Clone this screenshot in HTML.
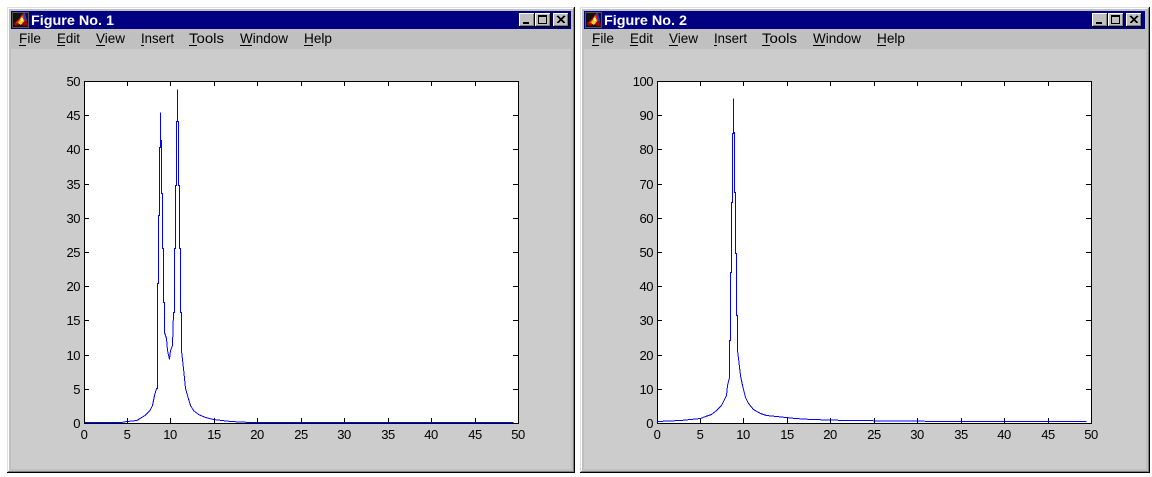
<!DOCTYPE html>
<html><head><meta charset="utf-8"><title>Figures</title>
<style>
html,body{margin:0;padding:0;background:#fff;width:1152px;height:477px;overflow:hidden}
svg{display:block}
.t{font:bold 14px "Liberation Sans",sans-serif;fill:#fff}
.m{font:14px "Liberation Sans",sans-serif;fill:#000}
.a{font:13px "Liberation Sans",sans-serif;fill:#000;letter-spacing:-.5px}
.e{text-anchor:end}.c{text-anchor:middle}
.k{fill:none;stroke:#000;stroke-width:1;shape-rendering:crispEdges}
.b{fill:none;stroke:#00f;stroke-width:1;shape-rendering:crispEdges}
.r{shape-rendering:crispEdges}
</style></head><body>
<svg width="1152" height="477" viewBox="0 0 1152 477" xmlns="http://www.w3.org/2000/svg">
<rect width="1152" height="477" fill="#fff"/>

<!-- window 1 -->
<g class="r">
<rect x="7" y="7" width="568" height="466" fill="#000"/>
<rect x="7" y="7" width="567" height="465" fill="#dfdfdf"/>
<rect x="8" y="8" width="566" height="464" fill="#808080"/>
<rect x="8" y="8" width="565" height="463" fill="#fff"/>
<rect x="9" y="9" width="564" height="462" fill="#c0c0c0"/>
<rect x="11" y="11" width="560" height="18" fill="#000080"/>
<rect x="11" y="29" width="560" height="20" fill="#c0c0c0"/>
<rect x="11" y="49" width="560" height="420" fill="#ccc"/>
<rect x="84" y="81" width="434" height="342" fill="#fff"/>
</g>
<g class="r">
<rect x="12" y="12" width="17" height="16" fill="#555"/>
<rect x="13" y="13" width="15" height="14" fill="#111"/>
<path d="M13 24L18 20L22 14L24 13L28 25L28 26L24 26L21 24L16 26Z" fill="#900"/>
<path d="M15 23L20 18L23 14L25 21L21 24Z" fill="#e21"/>
<path d="M18 23L22 16L24 21L21 25Z" fill="#fc2"/>
<path d="M23 13L25 13L27 21L25 21Z" fill="#33d"/>
<rect x="21" y="18" width="2" height="3" fill="#ffa"/>
</g>
<text class="t" x="31" y="25" textLength="83" lengthAdjust="spacingAndGlyphs">Figure No. 1</text>
<g class="r">
<rect x="519" y="13" width="16" height="14" fill="#000"/><rect x="519" y="13" width="15" height="13" fill="#fff"/><rect x="520" y="14" width="14" height="12" fill="#808080"/><rect x="520" y="14" width="13" height="11" fill="#c0c0c0"/><rect x="523" y="22" width="6" height="2" fill="#000"/>
<rect x="535" y="13" width="16" height="14" fill="#000"/><rect x="535" y="13" width="15" height="13" fill="#fff"/><rect x="536" y="14" width="14" height="12" fill="#808080"/><rect x="536" y="14" width="13" height="11" fill="#c0c0c0"/><path d="M538 15.500h9M538.500 16v7.500M546.500 16v7.500M538 23.500h9" stroke="#000" fill="none"/><rect x="538" y="15" width="9" height="2" fill="#000"/>
<rect x="553" y="13" width="16" height="14" fill="#000"/><rect x="553" y="13" width="15" height="13" fill="#fff"/><rect x="554" y="14" width="14" height="12" fill="#808080"/><rect x="554" y="14" width="13" height="11" fill="#c0c0c0"/><path d="M557 16l7 7M558 16l7 7M564 16l-7 7M565 16l-7 7" stroke="#000" fill="none"/>
</g>
<text class="m" x="19" y="43" textLength="22" lengthAdjust="spacingAndGlyphs">File</text><rect class="r" x="19" y="45" width="7" height="1" fill="#000"/>
<text class="m" x="57" y="43" textLength="23" lengthAdjust="spacingAndGlyphs">Edit</text><rect class="r" x="57" y="45" width="8" height="1" fill="#000"/>
<text class="m" x="96" y="43" textLength="29" lengthAdjust="spacingAndGlyphs">View</text><rect class="r" x="96" y="45" width="9" height="1" fill="#000"/>
<text class="m" x="141" y="43" textLength="33" lengthAdjust="spacingAndGlyphs">Insert</text><rect class="r" x="141" y="45" width="3" height="1" fill="#000"/>
<text class="m" x="189" y="43" textLength="35" lengthAdjust="spacingAndGlyphs">Tools</text><rect class="r" x="189" y="45" width="8" height="1" fill="#000"/>
<text class="m" x="240" y="43" textLength="48" lengthAdjust="spacingAndGlyphs">Window</text><rect class="r" x="240" y="45" width="12" height="1" fill="#000"/>
<text class="m" x="304" y="43" textLength="28" lengthAdjust="spacingAndGlyphs">Help</text><rect class="r" x="304" y="45" width="9" height="1" fill="#000"/>
<path class="k" d="M84.500 81.500H518.500V423.500H84.500ZM127.500 81v5M170.500 81v5M214.500 81v5M257.500 81v5M301.500 81v5M344.500 81v5M388.500 81v5M431.500 81v5M475.500 81v5M127.500 423v-5M170.500 423v-5M214.500 423v-5M257.500 423v-5M301.500 423v-5M344.500 423v-5M388.500 423v-5M431.500 423v-5M475.500 423v-5M84 115.500h5M84 149.500h5M84 184.500h5M84 218.500h5M84 252.500h5M84 286.500h5M84 320.500h5M84 355.500h5M84 389.500h5M518 115.500h-5M518 149.500h-5M518 184.500h-5M518 218.500h-5M518 252.500h-5M518 286.500h-5M518 320.500h-5M518 355.500h-5M518 389.500h-5"/>
<polyline class="b" points="84.500,422.500 121,422.500 127,421.500 137,420.500 140,418.500 145,415.500 150,410.500 152.500,405.500 154.500,395.500 156.500,388.500 157.500,388.500 157.500,352.500 157.500,283.500 158.500,283.500 158.500,215.500 159.500,215.500 159.500,147.500 160.500,147.500 160.500,112.500 160.500,140.500 161.500,140.500 161.500,193.500 162.500,193.500 162.500,248.500 163.500,248.500 163.500,302.500 164.500,302.500 164.500,332.500 166.500,338.500 167.500,350.500 169.500,359.500 170.500,350.500 172.500,345.500 173.500,312.500 174.500,312.500 174.500,248.500 175.500,248.500 175.500,185.500 176.500,185.500 176.500,121.500 177.500,121.500 177.500,89.500 177.500,121.500 178.500,121.500 178.500,185.500 179.500,185.500 179.500,248.500 180.500,248.500 180.500,312.500 181.500,312.500 181.500,350.500 183.500,368.500 185.500,388.500 187.500,395.500 190.500,405.500 193.500,410.500 198.500,414.500 205.500,417.500 213.500,419.500 230.500,421.500 250.500,422.500 513.500,422.500"/>
<g class="a">
<text class="e" x="80" y="86">50</text><text class="e" x="80" y="120">45</text><text class="e" x="80" y="154">40</text><text class="e" x="80" y="189">35</text><text class="e" x="80" y="223">30</text><text class="e" x="80" y="257">25</text><text class="e" x="80" y="291">20</text><text class="e" x="80" y="325">15</text><text class="e" x="80" y="360">10</text><text class="e" x="80" y="394">5</text><text class="e" x="80" y="428">0</text>
<text class="c" x="84" y="439">0</text><text class="c" x="127" y="439">5</text><text class="c" x="170" y="439">10</text><text class="c" x="214" y="439">15</text><text class="c" x="257" y="439">20</text><text class="c" x="301" y="439">25</text><text class="c" x="344" y="439">30</text><text class="c" x="388" y="439">35</text><text class="c" x="431" y="439">40</text><text class="c" x="475" y="439">45</text><text class="c" x="518" y="439">50</text>
</g>

<!-- window 2 -->
<g class="r">
<rect x="580" y="7" width="570" height="466" fill="#000"/>
<rect x="580" y="7" width="569" height="465" fill="#dfdfdf"/>
<rect x="581" y="8" width="568" height="464" fill="#808080"/>
<rect x="581" y="8" width="567" height="463" fill="#fff"/>
<rect x="582" y="9" width="566" height="462" fill="#c0c0c0"/>
<rect x="584" y="11" width="561" height="18" fill="#000080"/>
<rect x="584" y="29" width="562" height="20" fill="#c0c0c0"/>
<rect x="584" y="49" width="562" height="420" fill="#ccc"/>
<rect x="657" y="81" width="434" height="342" fill="#fff"/>
</g>
<g class="r">
<rect x="585" y="12" width="17" height="16" fill="#555"/>
<rect x="586" y="13" width="15" height="14" fill="#111"/>
<path d="M586 24L591 20L595 14L597 13L601 25L601 26L597 26L594 24L589 26Z" fill="#900"/>
<path d="M588 23L593 18L596 14L598 21L594 24Z" fill="#e21"/>
<path d="M591 23L595 16L597 21L594 25Z" fill="#fc2"/>
<path d="M596 13L598 13L600 21L598 21Z" fill="#33d"/>
<rect x="594" y="18" width="2" height="3" fill="#ffa"/>
</g>
<text class="t" x="604" y="25" textLength="83" lengthAdjust="spacingAndGlyphs">Figure No. 2</text>
<g class="r">
<rect x="1092" y="13" width="16" height="14" fill="#000"/><rect x="1092" y="13" width="15" height="13" fill="#fff"/><rect x="1093" y="14" width="14" height="12" fill="#808080"/><rect x="1093" y="14" width="13" height="11" fill="#c0c0c0"/><rect x="1096" y="22" width="6" height="2" fill="#000"/>
<rect x="1108" y="13" width="16" height="14" fill="#000"/><rect x="1108" y="13" width="15" height="13" fill="#fff"/><rect x="1109" y="14" width="14" height="12" fill="#808080"/><rect x="1109" y="14" width="13" height="11" fill="#c0c0c0"/><path d="M1111 15.500h9M1111.500 16v7.500M1119.500 16v7.500M1111 23.500h9" stroke="#000" fill="none"/><rect x="1111" y="15" width="9" height="2" fill="#000"/>
<rect x="1126" y="13" width="16" height="14" fill="#000"/><rect x="1126" y="13" width="15" height="13" fill="#fff"/><rect x="1127" y="14" width="14" height="12" fill="#808080"/><rect x="1127" y="14" width="13" height="11" fill="#c0c0c0"/><path d="M1130 16l7 7M1131 16l7 7M1137 16l-7 7M1138 16l-7 7" stroke="#000" fill="none"/>
</g>
<text class="m" x="592" y="43" textLength="22" lengthAdjust="spacingAndGlyphs">File</text><rect class="r" x="592" y="45" width="7" height="1" fill="#000"/>
<text class="m" x="630" y="43" textLength="23" lengthAdjust="spacingAndGlyphs">Edit</text><rect class="r" x="630" y="45" width="8" height="1" fill="#000"/>
<text class="m" x="669" y="43" textLength="29" lengthAdjust="spacingAndGlyphs">View</text><rect class="r" x="669" y="45" width="9" height="1" fill="#000"/>
<text class="m" x="714" y="43" textLength="33" lengthAdjust="spacingAndGlyphs">Insert</text><rect class="r" x="714" y="45" width="3" height="1" fill="#000"/>
<text class="m" x="762" y="43" textLength="35" lengthAdjust="spacingAndGlyphs">Tools</text><rect class="r" x="762" y="45" width="8" height="1" fill="#000"/>
<text class="m" x="813" y="43" textLength="48" lengthAdjust="spacingAndGlyphs">Window</text><rect class="r" x="813" y="45" width="12" height="1" fill="#000"/>
<text class="m" x="877" y="43" textLength="28" lengthAdjust="spacingAndGlyphs">Help</text><rect class="r" x="877" y="45" width="9" height="1" fill="#000"/>
<path class="k" d="M657.500 81.500H1091.500V423.500H657.500ZM700.500 81v5M743.500 81v5M787.500 81v5M830.500 81v5M874.500 81v5M917.500 81v5M961.500 81v5M1004.500 81v5M1048.500 81v5M700.500 423v-5M743.500 423v-5M787.500 423v-5M830.500 423v-5M874.500 423v-5M917.500 423v-5M961.500 423v-5M1004.500 423v-5M1048.500 423v-5M657 115.500h5M657 149.500h5M657 184.500h5M657 218.500h5M657 252.500h5M657 286.500h5M657 320.500h5M657 355.500h5M657 389.500h5M1091 115.500h-5M1091 149.500h-5M1091 184.500h-5M1091 218.500h-5M1091 252.500h-5M1091 286.500h-5M1091 320.500h-5M1091 355.500h-5M1091 389.500h-5"/>
<polyline class="b" points="657.500,421.500 680.500,420.500 700.500,418.500 705.500,416.500 711.500,414.500 716.500,410.500 721.500,405.500 726.500,395.500 727.500,385.500 729.500,377.500 729.500,340.500 730.500,340.500 730.500,272.500 731.500,272.500 731.500,202.500 732.500,202.500 732.500,133.500 733.500,133.500 733.500,98.500 733.500,132.500 734.500,132.500 734.500,192.500 735.500,192.500 735.500,253.500 736.500,253.500 736.500,315.500 737.500,315.500 737.500,350.500 738.500,358.500 740.500,375.500 742.500,385.500 745.500,397.500 748.500,403.500 753.500,409.500 760.500,413.500 766.500,415.500 776.500,416.500 795.500,418.500 811.500,419.500 846.500,420.500 950.500,421.500 1086.500,421.500"/>
<g class="a">
<text class="e" x="653" y="86">100</text><text class="e" x="653" y="120">90</text><text class="e" x="653" y="154">80</text><text class="e" x="653" y="189">70</text><text class="e" x="653" y="223">60</text><text class="e" x="653" y="257">50</text><text class="e" x="653" y="291">40</text><text class="e" x="653" y="325">30</text><text class="e" x="653" y="360">20</text><text class="e" x="653" y="394">10</text><text class="e" x="653" y="428">0</text>
<text class="c" x="657" y="439">0</text><text class="c" x="700" y="439">5</text><text class="c" x="743" y="439">10</text><text class="c" x="787" y="439">15</text><text class="c" x="830" y="439">20</text><text class="c" x="874" y="439">25</text><text class="c" x="917" y="439">30</text><text class="c" x="961" y="439">35</text><text class="c" x="1004" y="439">40</text><text class="c" x="1048" y="439">45</text><text class="c" x="1091" y="439">50</text>
</g>
</svg>
</body></html>
